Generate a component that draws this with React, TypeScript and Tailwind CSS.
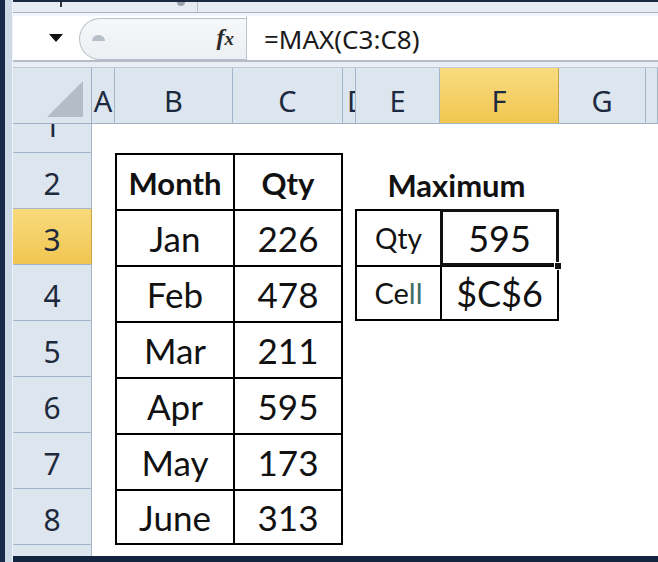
import React from 'react';

type Col = { key: string; w: string; label: string; align?: string };

const COLS: Col[] = [
  { key: 'A', w: 'w-[23px]', label: 'A' },
  { key: 'B', w: 'w-[118px]', label: 'B' },
  { key: 'C', w: 'w-[110px]', label: 'C' },
  { key: 'D', w: 'w-[13px]', label: 'D', align: 'justify-start pl-[4px]' },
  { key: 'E', w: 'w-[84px]', label: 'E' },
  { key: 'F', w: 'w-[119px]', label: 'F' },
  { key: 'G', w: 'w-[87px]', label: 'G' },
  { key: 'H', w: 'flex-1', label: '' },
];

const DATA = [
  { n: 3, month: 'Jan', qty: '226' },
  { n: 4, month: 'Feb', qty: '478' },
  { n: 5, month: 'Mar', qty: '211' },
  { n: 6, month: 'Apr', qty: '595' },
  { n: 7, month: 'May', qty: '173' },
  { n: 8, month: 'June', qty: '313' },
];

const hdrFont = { fontFamily: '"Noto Sans", "Open Sans", sans-serif' };
const cellFont = { fontFamily: 'Lato, "Open Sans", sans-serif' };

function RowHeader({ n, active, h = 'h-[56px]' }: { n: number; active?: boolean; h?: string }) {
  return (
    <div
      className={`w-[79px] ${h} shrink-0 flex items-center justify-center pt-[5px] border-b border-r border-[#a3b5c9] text-[30px] text-[#1d2a3d] ${
        active ? 'bg-gradient-to-b from-[#f8da7c] to-[#f1c650] border-r-[#c9a24a]' : 'bg-[#dde5ee]'
      }`}
      style={hdrFont}
    >
      {n}
    </div>
  );
}

function Cell({
  w,
  className = '',
  children,
}: {
  w: string;
  className?: string;
  children?: React.ReactNode;
}) {
  return (
    <div className={`${w} h-full shrink-0 flex items-center justify-center text-[#111] ${className}`} style={cellFont}>
      {children}
    </div>
  );
}

export default function App() {
  return (
    <div className="w-[658px] h-[562px] bg-[#142541] flex overflow-hidden">
      {/* window frame */}
      <div className="w-[5px] h-full bg-[#172a4a]" />
      <div className="w-[8px] h-full bg-[#cdd9e7] border-r border-[#eef3f8]" />

      <div className="flex-1 flex flex-col h-full">
        {/* toolbar remnant */}
        <div className="h-[2px] bg-[#1b2a44]" />
        <div className="h-[10px] bg-[#e7ecf2] relative">
          <div className="absolute left-[47px] top-0 w-[2px] h-[5px] bg-[#333]" />
          <div className="absolute left-[164px] top-0 w-[8px] h-[4px] rounded-b bg-[#9aa3ad]" />
          <div className="absolute left-[184px] top-0 w-px h-[10px] bg-[#b9c1cb]" />
        </div>
        <div className="h-px bg-[#a7b1bd]" />
        <div className="h-[3px] bg-[#f1f4f8]" />

        {/* formula bar */}
        <div className="h-[44px] bg-white flex">
          <div className="w-[66px] flex items-center justify-end pr-[16px]">
            <svg width="14" height="8" viewBox="0 0 14 8">
              <path d="M0 0 H14 L7 8 Z" fill="#111" />
            </svg>
          </div>
          <div className="w-[167px] mt-[2px] rounded-l-[22px] border border-r-0 border-[#b6bec8] bg-gradient-to-b from-[#f6f7f9] to-[#eceff3] flex items-center relative">
            <div className="absolute left-[12px] top-[16px] w-[13px] h-[6px] rounded-t-full bg-[#b8bfc8]" />
            <span
              className="ml-auto mr-[12px] text-[24px] italic font-bold text-[#2a2a2a] leading-none -mt-[4px]"
              style={{ fontFamily: '"Liberation Serif", serif' }}
            >
              f<span className="text-[19px]">x</span>
            </span>
          </div>
          <div className="w-px bg-[#bcc5cf]" />
          <div className="flex-1 flex items-center pl-[17px] pt-[2px] text-[26px] text-[#1a1a1a]" style={hdrFont}>
            =MAX(C3:C8)
          </div>
        </div>
        <div className="h-[2px] bg-[#b3bcc7]" />
        <div className="h-[6px] bg-[#e9eef4] border-b border-[#c3ccd6]" />

        {/* column headers */}
        <div className="h-[56px] flex bg-[#dde5ee] border-b border-[#9fb1c5]">
          <div className="w-[79px] shrink-0 border-r border-[#9fb1c5] flex items-end justify-end pr-[8px] pb-[6px]">
            <svg width="36" height="36" viewBox="0 0 36 36">
              <path d="M36 0 V36 H0 Z" fill="#b3bcc7" />
            </svg>
          </div>
          {COLS.map(c => (
            <div
              key={c.key}
              className={`${c.w} shrink-0 overflow-hidden flex items-center pt-[10px] text-[29px] text-[#1b2a40] border-r ${
                c.align ?? 'justify-center'
              } ${
                c.key === 'F'
                  ? 'bg-gradient-to-b from-[#f9dc80] to-[#f1c64f] border-[#c9a24a]'
                  : 'border-[#a3b5c9]'
              }`}
              style={hdrFont}
            >
              {c.label}
            </div>
          ))}
        </div>

        {/* sheet */}
        <div className="flex-1 flex flex-col bg-white">
          {/* row 1 (partly scrolled) */}
          <div className="h-[29px] flex">
            <div className="w-[79px] h-[29px] shrink-0 overflow-hidden bg-[#dde5ee] border-b border-r border-[#a3b5c9]">
              <div className="h-[56px] -mt-[29px] flex items-center justify-center pt-[5px] text-[30px] text-[#1d2a3d]" style={hdrFont}>
                1
              </div>
            </div>
          </div>

          {/* row 2 */}
          <div className="h-[56px] flex">
            <RowHeader n={2} />
            <Cell w="w-[23px]" />
            <Cell w="w-[118px]" className="border-l-2 border-t-2 border-black font-bold text-[31px] pt-[2px]">
              Month
            </Cell>
            <Cell w="w-[110px]" className="border-l-2 border-r-2 border-t-2 border-black font-bold text-[31px] pt-[2px]">
              Qty
            </Cell>
            <Cell w="w-[13px]" />
            <Cell w="w-[203px]" className="font-bold text-[31px] pt-[8px] pr-[2px]">
              Maximum
            </Cell>
          </div>

          {DATA.map((r, i) => (
            <div key={r.n} className="h-[56px] flex">
              <RowHeader n={r.n} active={r.n === 3} />
              <Cell w="w-[23px]" />
              <Cell
                w="w-[118px]"
                className={`border-l-2 border-t-2 border-black text-[35px] ${i === DATA.length - 1 ? 'border-b-2' : ''}`}
              >
                {r.month}
              </Cell>
              <Cell
                w="w-[110px]"
                className={`border-l-2 border-r-2 border-t-2 border-black text-[35px] ${
                  i === DATA.length - 1 ? 'border-b-2' : ''
                }`}
              >
                {r.qty}
              </Cell>
              <Cell w="w-[13px]" />
              {r.n === 3 && (
                <>
                  <Cell w="w-[85px]" className="border-l-2 border-t-2 border-black text-[28px] -ml-px">
                    Qty
                  </Cell>
                  <Cell w="w-[119px]" className="border-l-2 border-r-2 border-t-2 border-black text-[36px] relative">
                    595
                    <div className="absolute -left-[2px] -top-[2px] -right-[2px] -bottom-[1px] border-[3px] border-[#111]" />
                    <div className="absolute -right-[5px] -bottom-[5px] w-[8px] h-[8px] bg-[#111] border border-white" />
                  </Cell>
                </>
              )}
              {r.n === 4 && (
                <>
                  <Cell w="w-[85px]" className="border-l-2 border-t-2 border-b-2 border-black text-[29px] -ml-px">
                    <span>
                      Ce<span className="text-[#3e6f67]">ll</span>
                    </span>
                  </Cell>
                  <Cell w="w-[119px]" className="border-l-2 border-r-2 border-t-2 border-b-2 border-black text-[36px]">
                    $C$6
                  </Cell>
                </>
              )}
            </div>
          ))}

          {/* row 9 (partly visible) */}
          <div className="h-[11px] flex">
            <div className="w-[79px] h-[11px] shrink-0 bg-[#dde5ee] border-r border-[#a3b5c9]" />
          </div>
          <div className="flex-1 bg-[#142541]" />
        </div>
      </div>
    </div>
  );
}
